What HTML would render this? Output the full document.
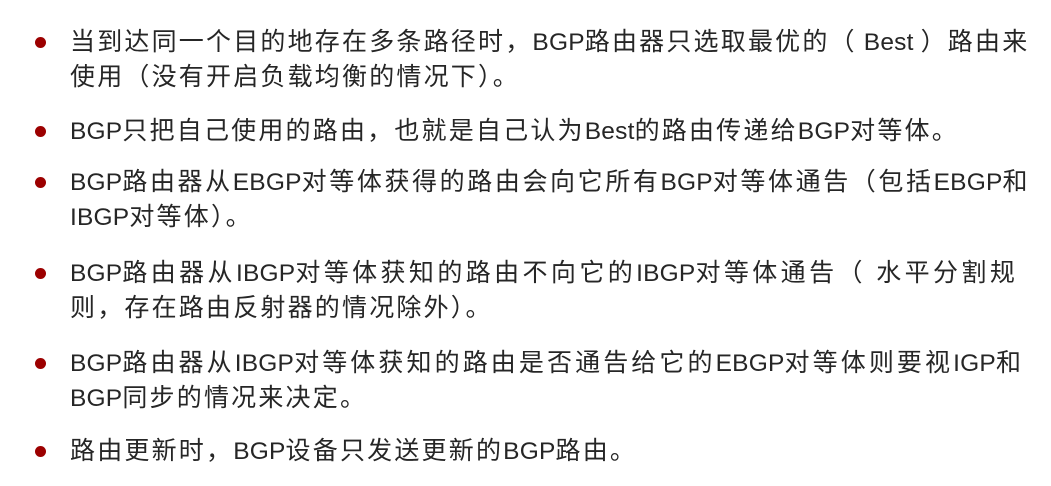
<!DOCTYPE html>
<html><head><meta charset="utf-8"><style>
body{margin:0;width:1051px;height:486px;background:#fff;overflow:hidden;position:relative;font-family:"Liberation Sans","Noto Sans CJK SC",sans-serif;color:#262626;}
.l{position:absolute;left:70px;font-size:25px;letter-spacing:2.2px;white-space:nowrap;line-height:30px;}
.l b{font-weight:normal;font-size:24.5px;letter-spacing:0.2px;}
.d{position:absolute;left:35px;width:11px;height:11px;border-radius:50%;background:#9c0000;}
</style></head><body>
<div class="d" style="top:37px"></div>
<div class="l" style="top:27px">当到达同一个目的地存在多条路径时，<b>BGP</b>路由器只选取最优的（<b> Best </b>）路由来</div>
<div class="l" style="top:62px">使用（没有开启负载均衡的情况下）。</div>
<div class="d" style="top:126px"></div>
<div class="l" style="top:116px"><b>BGP</b>只把自己使用的路由，也就是自己认为<b>Best</b>的路由传递给<b>BGP</b>对等体。</div>
<div class="d" style="top:177px"></div>
<div class="l" style="top:167px;letter-spacing:2.6px"><b>BGP</b>路由器从<b>EBGP</b>对等体获得的路由会向它所有<b>BGP</b>对等体通告（包括<b>EBGP</b>和</div>
<div class="l" style="top:202px"><b>IBGP</b>对等体）。</div>
<div class="d" style="top:268px"></div>
<div class="l" style="top:258px;letter-spacing:3.4px"><b>BGP</b>路由器从<b>IBGP</b>对等体获知的路由不向它的<b>IBGP</b>对等体通告（ 水平分割规</div>
<div class="l" style="top:293px">则，存在路由反射器的情况除外）。</div>
<div class="d" style="top:358px"></div>
<div class="l" style="top:348px;letter-spacing:3.1px"><b>BGP</b>路由器从<b>IBGP</b>对等体获知的路由是否通告给它的<b>EBGP</b>对等体则要视<b>IGP</b>和</div>
<div class="l" style="top:383px"><b>BGP</b>同步的情况来决定。</div>
<div class="d" style="top:446px"></div>
<div class="l" style="top:436px">路由更新时，<b>BGP</b>设备只发送更新的<b>BGP</b>路由。</div>
</body></html>
